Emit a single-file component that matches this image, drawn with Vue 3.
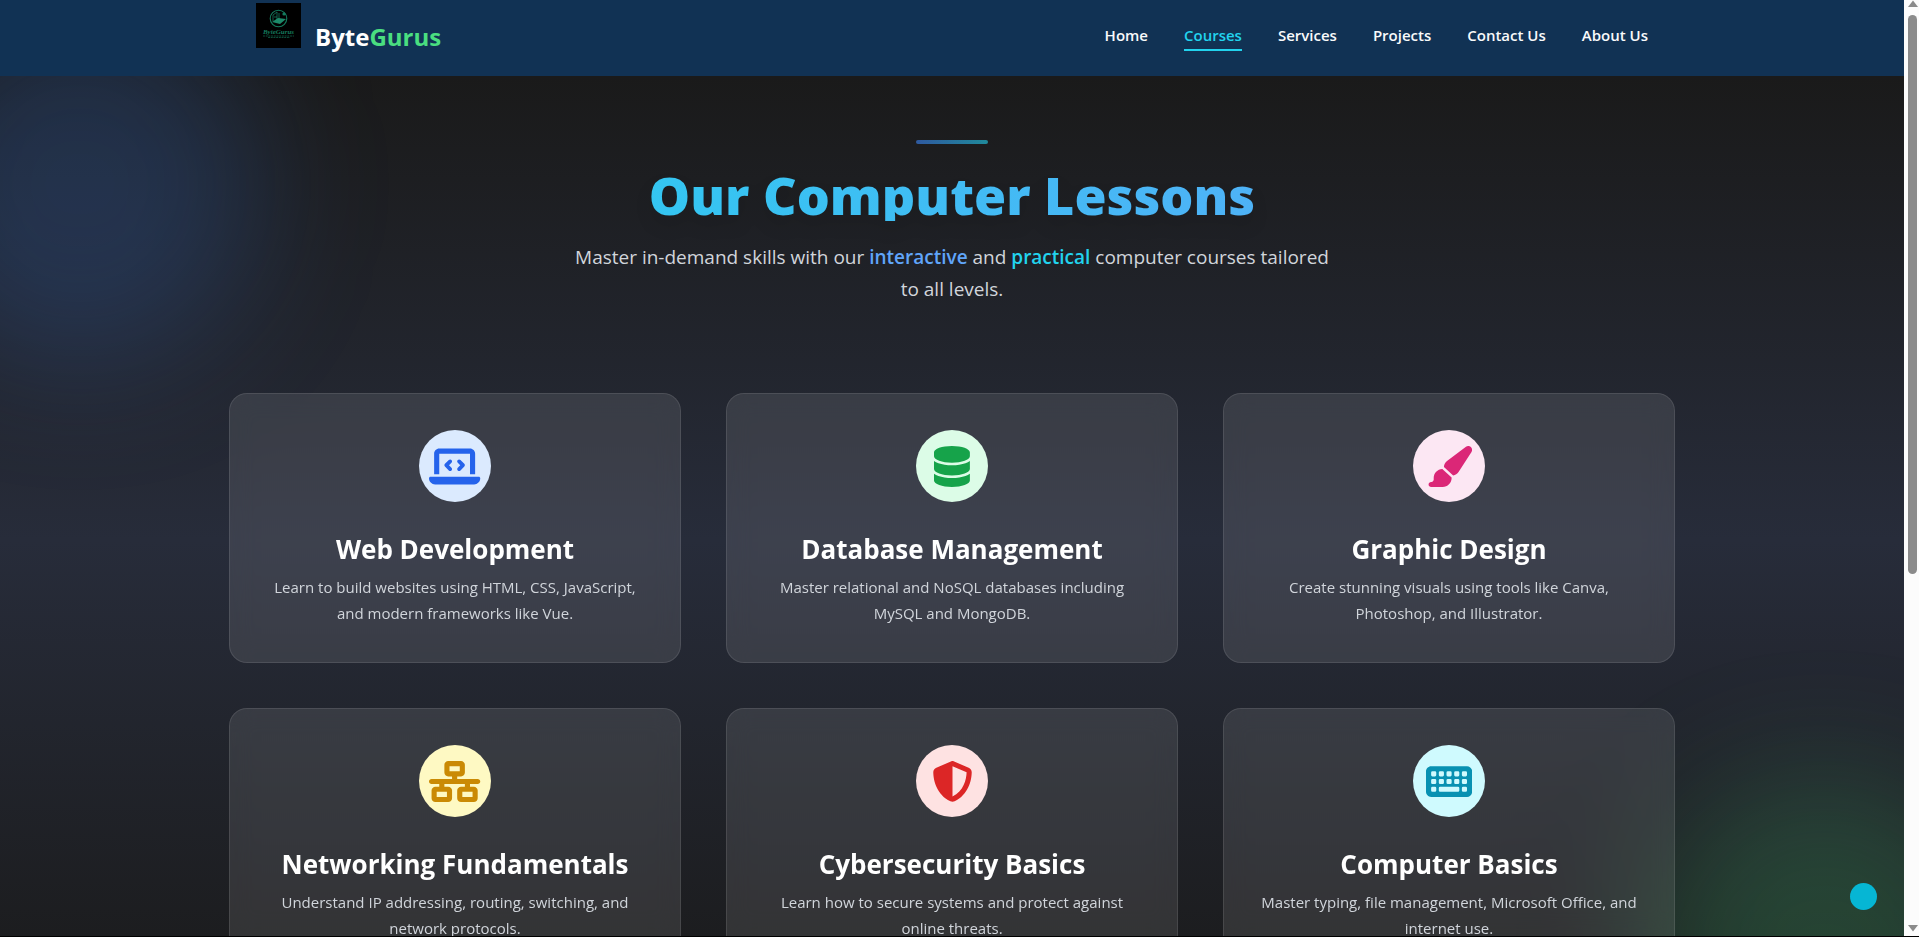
<script setup>
const navLinks = ['Home', 'Courses', 'Services', 'Projects', 'Contact Us', 'About Us']
const activeLink = 'Courses'

const key = (x, y, w = 64) =>
  `M${x + 16} ${y}h${w - 32}q16 0 16 16v32q0 16 -16 16h-${w - 32}q-16 0 -16 -16v-32q0 -16 16 -16z`
const columns = [64, 160, 256, 352, 448]
const keyboard =
  'M64 64C28.7 64 0 92.7 0 128V384c0 35.3 28.7 64 64 64H512c35.3 0 64-28.7 64-64V128c0-35.3-28.7-64-64-64H64z' +
  columns.map((x) => key(x, 128) + key(x, 224)).join('') +
  key(64, 320) + key(160, 320, 256) + key(448, 320)

const courses = [
  {
    tone: 'blue',
    title: 'Web Development',
    text: 'Learn to build websites using HTML, CSS, JavaScript, and modern frameworks like Vue.',
    width: 640,
    path: 'M64 96c0-35.3 28.7-64 64-64H512c35.3 0 64 28.7 64 64V352H512V96H128V352H64V96zM0 403.2C0 392.6 8.6 384 19.2 384H620.8c10.6 0 19.2 8.6 19.2 19.2c0 42.4-34.4 76.8-76.8 76.8H76.8C34.4 480 0 445.6 0 403.2zM281 209l-31 31 31 31c9.4 9.4 9.4 24.6 0 33.9s-24.6 9.4-33.9 0l-48-48c-9.4-9.4-9.4-24.6 0-33.9l48-48c9.4-9.4 24.6-9.4 33.9 0s9.4 24.6 0 33.9zM393 175l48 48c9.4 9.4 9.4 24.6 0 33.9l-48 48c-9.4 9.4-24.6 9.4-33.9 0s-9.4-24.6 0-33.9l31-31-31-31c-9.4-9.4-9.4-24.6 0-33.9s24.6-9.4 33.9 0z'
  },
  {
    tone: 'green',
    title: 'Database Management',
    text: 'Master relational and NoSQL databases including MySQL and MongoDB.',
    width: 448,
    path: 'M448 80v48c0 44.2-100.3 80-224 80S0 172.2 0 128V80C0 35.8 100.3 0 224 0S448 35.8 448 80zM393.2 214.7c20.8-7.4 39.9-16.9 54.8-28.6V288c0 44.2-100.3 80-224 80S0 332.2 0 288V186.1c14.9 11.8 34 21.2 54.8 28.6C99.7 230.7 159.5 240 224 240s124.3-9.3 169.2-25.3zM0 346.1c14.9 11.8 34 21.2 54.8 28.6C99.7 390.7 159.5 400 224 400s124.3-9.3 169.2-25.3c20.8-7.4 39.9-16.9 54.8-28.6V432c0 44.2-100.3 80-224 80S0 476.2 0 432V346.1z'
  },
  {
    tone: 'pink',
    title: 'Graphic Design',
    text: 'Create stunning visuals using tools like Canva, Photoshop, and Illustrator.',
    width: 576,
    path: 'M339.3 367.1c27.3-3.9 51.9-19.4 67.2-42.9L568.2 74.1c12.6-19.5 9.4-45.3-7.6-61.2S517.7-4.4 499.1 9.6L262.4 187.2c-24 18-38.2 46.1-38.4 76.1L339.3 367.1zm-19.6 25.4l-116-104.4C143.9 290.3 96 339.6 96 400c0 3.9 .2 7.8 .6 11.6C98.4 429.1 86.4 448 68.8 448H64c-17.7 0-32 14.3-32 32s14.3 32 32 32H208c61.9 0 112-50.1 112-112c0-2.5-.1-5-.2-7.5z'
  },
  {
    tone: 'yellow',
    title: 'Networking Fundamentals',
    text: 'Understand IP addressing, routing, switching, and network protocols.',
    width: 640,
    path: 'M256 64H384v64H256V64zM240 0c-26.5 0-48 21.5-48 48v96c0 26.5 21.5 48 48 48h48v32H32c-17.7 0-32 14.3-32 32s14.3 32 32 32h96v32H80c-26.5 0-48 21.5-48 48v96c0 26.5 21.5 48 48 48H240c26.5 0 48-21.5 48-48V368c0-26.5-21.5-48-48-48H192V288H448v32H400c-26.5 0-48 21.5-48 48v96c0 26.5 21.5 48 48 48H560c26.5 0 48-21.5 48-48V368c0-26.5-21.5-48-48-48H512V288h96c17.7 0 32-14.3 32-32s-14.3-32-32-32H352V192h48c26.5 0 48-21.5 48-48V48c0-26.5-21.5-48-48-48H240zM96 448V384H224v64H96zm320-64H544v64H416V384z'
  },
  {
    tone: 'red',
    title: 'Cybersecurity Basics',
    text: 'Learn how to secure systems and protect against online threats.',
    width: 512,
    path: 'M256 0c4.6 0 9.2 1 13.4 2.9L457.7 82.8c22 9.3 38.4 31 38.3 57.2c-.5 99.2-41.3 280.7-213.6 363.2c-16.7 8-36.1 8-52.8 0C57.3 420.7 16.5 239.2 16 140c-.1-26.2 16.3-47.9 38.3-57.2L242.7 2.9C246.8 1 251.4 0 256 0zm0 66.8V444.8C394 378 431.1 230.1 432 141.4L256 66.8z'
  },
  {
    tone: 'cyan',
    title: 'Computer Basics',
    text: 'Master typing, file management, Microsoft Office, and internet use.',
    width: 576,
    path: keyboard
  }
]
</script>

<template>
  <div class="viewport">
    <div class="page">
      <header class="site-header">
        <div class="container header-inner">
          <a class="brand" href="#home">
            <svg class="logo" viewBox="0 0 45 45" aria-hidden="true">
              <rect width="45" height="45" fill="#000" />
              <g fill="none" stroke="#147a5d">
                <circle cx="22.500" cy="15.500" r="8.300" stroke-width="1.100" />
                <path d="M17 18V12l4-3v8M18 14h3M23 10v6l4 2" stroke-width=".8" />
              </g>
              <path d="M16 19l6-4 8 1-6 5z" fill="#1c8a69" />
              <circle cx="28" cy="11" r="1.600" fill="#147a5d" />
              <text x="22.500" y="31" class="logo-name">ByteGurus</text>
              <path d="M7 33h31M12 34.500h22" stroke="#0f5f49" stroke-width=".8" stroke-dasharray="2 .7" />
            </svg>
            <span class="brand-name">Byte<span class="brand-accent">Gurus</span></span>
          </a>
          <nav class="nav">
            <a
              v-for="link in navLinks"
              :key="link"
              href="#"
              class="nav-link"
              :class="{ active: link === activeLink }"
            >{{ link }}</a>
          </nav>
        </div>
      </header>

      <main class="lessons">
        <div class="glow glow-blue"></div>
        <div class="glow glow-green"></div>
        <div class="container content">
          <section class="hero">
            <div class="hero-bar"></div>
            <h1>Our Computer Lessons</h1>
            <p>
              Master in-demand skills with our <strong class="blue-word">interactive</strong> and
              <strong class="cyan-word">practical</strong> computer courses tailored to all levels.
            </p>
          </section>
          <section class="grid">
            <article v-for="course in courses" :key="course.title" class="card">
              <div class="icon" :class="course.tone">
                <svg :viewBox="`0 0 ${course.width} 512`" aria-hidden="true">
                  <path :d="course.path" fill="currentColor" fill-rule="evenodd" />
                </svg>
              </div>
              <h2>{{ course.title }}</h2>
              <p>{{ course.text }}</p>
            </article>
          </section>
        </div>
      </main>
      <button class="fab" type="button" aria-label="Back to top"></button>
    </div>

    <div class="scrollbar" aria-hidden="true">
      <svg class="arrow" viewBox="0 0 12 8"><path d="M6 0.500L11 7H1z" /></svg>
      <div class="track"><div class="thumb"></div></div>
      <svg class="arrow" viewBox="0 0 12 8"><path d="M6 7.500L11 1H1z" /></svg>
    </div>
  </div>
</template>

<style>
html,
body {
  overflow: hidden;
  background: #000;
}
</style>

<style scoped>
* {
  box-sizing: border-box;
}
.viewport {
  display: grid;
  grid-template-columns: 1fr 15px;
  height: 100vh;
  border-bottom: 1px solid #000;
  overflow: hidden;
  font-family: "Open Sans", "Noto Sans", sans-serif;
}
.page {
  position: relative;
  display: flex;
  flex-direction: column;
  min-height: 0;
  overflow: hidden;
}
.container {
  width: 100%;
  max-width: 1446px;
  margin: 0 auto;
}
.site-header {
  position: relative;
  z-index: 2;
  flex: none;
  background: #113254;
}
.header-inner {
  display: flex;
  justify-content: space-between;
  height: 76px;
  padding: 0 27px;
}
.brand {
  display: flex;
  gap: 14px;
  padding-top: 3px;
  text-decoration: none;
}
.logo {
  width: 45px;
  height: 45px;
}
.logo-name {
  font: italic bold 7px "Liberation Serif", serif;
  text-anchor: middle;
  fill: #147a5d;
}
.brand-name {
  padding-top: 16px;
  font-size: 24px;
  line-height: 36px;
  font-weight: 700;
  color: #fff;
}
.brand-accent {
  color: #4ade80;
}
.nav {
  display: flex;
  align-items: flex-start;
  gap: 36px;
  padding-top: 23px;
}
.nav-link {
  padding-bottom: 2px;
  border-bottom: 2px solid transparent;
  font-size: 15px;
  line-height: 24px;
  font-weight: 600;
  color: #f9fafb;
  text-decoration: none;
}
.nav-link.active {
  color: #22d3ee;
  border-color: #22d3ee;
}
.lessons {
  position: relative;
  flex: 1;
  min-height: 0;
  overflow: hidden;
  background: linear-gradient(to bottom, #1a1a1a 0%, #272c3a 54%, #1a1a1a 109%);
}
.glow {
  position: absolute;
  width: 360px;
  height: 360px;
  border-radius: 50%;
  filter: blur(64px);
}
.glow-blue {
  top: -72px;
  left: -100px;
  background: rgba(59, 130, 246, 0.2);
}
.glow-green {
  right: -100px;
  bottom: -200px;
  background: rgba(74, 222, 128, 0.2);
}
.content {
  position: relative;
  padding-top: 64px;
}
.hero {
  display: flex;
  flex-direction: column;
  align-items: center;
  margin-bottom: 88px;
  text-align: center;
}
.hero-bar {
  width: 72px;
  height: 4px;
  border-radius: 2px;
  background: linear-gradient(to right, #3b82f6, #22d3ee);
  opacity: 0.6;
}
h1 {
  width: 100%;
  margin: 25px 0 20px;
  font-size: 52px;
  line-height: 52px;
  font-weight: 800;
  color: transparent;
  background: linear-gradient(to right, #22d3ee, #60a5fa);
  background-clip: text;
  -webkit-background-clip: text;
  filter: drop-shadow(0 10px 8px rgba(0, 0, 0, 0.1));
}
.hero p {
  max-width: 774px;
  margin: 0;
  font-size: 19px;
  line-height: 32px;
  color: #d1d5db;
}
.hero strong {
  font-weight: 600;
}
.hero .blue-word {
  color: #60a5fa;
}
.hero .cyan-word {
  color: #22d3ee;
}
.grid {
  display: grid;
  grid-template-columns: repeat(3, 1fr);
  gap: 45px;
}
.card {
  display: flex;
  flex-direction: column;
  align-items: center;
  padding: 36px;
  border: 1px solid rgba(255, 255, 255, 0.1);
  border-radius: 18px;
  background: rgba(255, 255, 255, 0.1);
  backdrop-filter: blur(12px);
  text-align: center;
}
.icon {
  display: flex;
  align-items: center;
  justify-content: center;
  width: 72px;
  height: 72px;
  margin-bottom: 29px;
  border-radius: 50%;
}
.icon svg {
  height: 41px;
}
.blue { color: #2563eb; background: #dbeafe; }
.green { color: #16a34a; background: #dcfce7; }
.pink { color: #db2777; background: #fce7f3; }
.yellow { color: #ca8a04; background: #fef9c3; }
.red { color: #dc2626; background: #fee2e2; }
.cyan { color: #0891b2; background: #cffafe; }
h2 {
  margin: 0 0 7px;
  font-size: 26px;
  line-height: 36px;
  font-weight: 700;
  color: #fff;
}
.card p {
  margin: 0;
  font-size: 15px;
  line-height: 26px;
  color: #d1d5db;
}
.fab {
  position: absolute;
  right: 27px;
  bottom: 26px;
  width: 27px;
  height: 27px;
  padding: 0;
  border: 0;
  border-radius: 50%;
  background: #06b6d4;
}
.scrollbar {
  display: flex;
  flex-direction: column;
  align-items: center;
  padding-left: 2px;
  background: #fcfcfc;
}
.arrow {
  width: 12px;
  height: 8px;
  fill: #8b8b8b;
}
.track {
  flex: 1;
  width: 9px;
  padding: 7px 0;
}
.arrow:last-child {
  margin-bottom: 4px;
}
.thumb {
  height: 62%;
  border-radius: 5px;
  background: #8b8b8b;
}
</style>
